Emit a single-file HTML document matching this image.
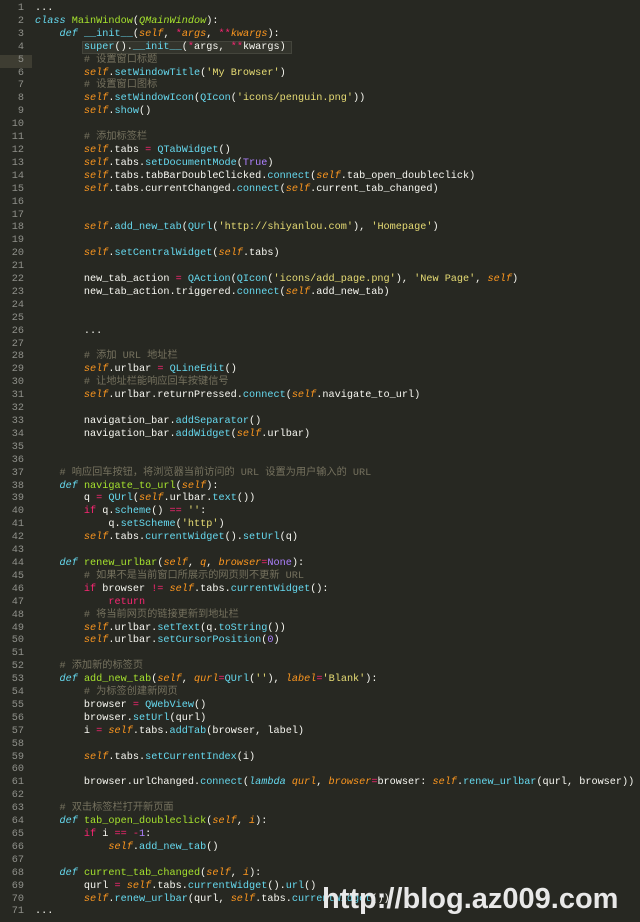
<!DOCTYPE html>
<html><head><meta charset="utf-8"><style>
html,body{margin:0;padding:0;background:#272822;width:640px;height:922px;overflow:hidden}
.w{position:absolute;left:0;top:3px}
.ln{position:absolute;left:0;width:24px;text-align:right;color:#8f908a}
.code{position:absolute;left:35px;color:#f8f8f2;white-space:pre}
.ln,.code{font-family:"Liberation Mono","Noto Sans CJK SC",monospace;font-size:10.2px;line-height:12.9px;white-space:pre}
.s,.p{color:#fd971f;font-style:italic}
.f{color:#66d9ef}
.d{color:#66d9ef;font-style:italic}
.k{color:#f92672}
.t{color:#e6db74}
.c{color:#75715e}
.n{color:#ae81ff}
.g{color:#a6e22e}
.hl{position:absolute;left:0;top:55px;width:32px;height:13px;background:#3e3d32}
.box{position:absolute;left:82px;top:41px;width:210px;height:13px;background:#33342c;border:1px solid #44453c;box-sizing:border-box}
.wm{position:absolute;left:322px;top:883px;font-family:"Liberation Sans",sans-serif;font-weight:bold;font-size:29px;color:#e8e8e8;letter-spacing:0px}
</style></head><body>
<div class="hl"></div><div class="box"></div>
<div class="w">
<div class="ln">1
2
3
4
5
6
7
8
9
10
11
12
13
14
15
16
17
18
19
20
21
22
23
24
25
26
27
28
29
30
31
32
33
34
35
36
37
38
39
40
41
42
43
44
45
46
47
48
49
50
51
52
53
54
55
56
57
58
59
60
61
62
63
64
65
66
67
68
69
70
71</div>
<div class="code">...
<span class="d">class</span> <span class="g">MainWindow</span>(<span class="g" style="font-style:italic">QMainWindow</span>):
    <span class="d">def</span> <span class="f">__init__</span>(<span class="p">self</span>, <span class="k">*</span><span class="p">args</span>, <span class="k">**</span><span class="p">kwargs</span>):
        <span class="f">super</span>().<span class="f">__init__</span>(<span class="k">*</span>args, <span class="k">**</span>kwargs)
        <span class="c"># 设置窗口标题</span>
        <span class="s">self</span>.<span class="f">setWindowTitle</span>(<span class="t">'My Browser'</span>)
        <span class="c"># 设置窗口图标</span>
        <span class="s">self</span>.<span class="f">setWindowIcon</span>(<span class="f">QIcon</span>(<span class="t">'icons/penguin.png'</span>))
        <span class="s">self</span>.<span class="f">show</span>()

        <span class="c"># 添加标签栏</span>
        <span class="s">self</span>.tabs <span class="k">=</span> <span class="f">QTabWidget</span>()
        <span class="s">self</span>.tabs.<span class="f">setDocumentMode</span>(<span class="n">True</span>)
        <span class="s">self</span>.tabs.tabBarDoubleClicked.<span class="f">connect</span>(<span class="s">self</span>.tab_open_doubleclick)
        <span class="s">self</span>.tabs.currentChanged.<span class="f">connect</span>(<span class="s">self</span>.current_tab_changed)


        <span class="s">self</span>.<span class="f">add_new_tab</span>(<span class="f">QUrl</span>(<span class="t">'http://shiyanlou.com'</span>), <span class="t">'Homepage'</span>)

        <span class="s">self</span>.<span class="f">setCentralWidget</span>(<span class="s">self</span>.tabs)

        new_tab_action <span class="k">=</span> <span class="f">QAction</span>(<span class="f">QIcon</span>(<span class="t">'icons/add_page.png'</span>), <span class="t">'New Page'</span>, <span class="s">self</span>)
        new_tab_action.triggered.<span class="f">connect</span>(<span class="s">self</span>.add_new_tab)


        ...

        <span class="c"># 添加 URL 地址栏</span>
        <span class="s">self</span>.urlbar <span class="k">=</span> <span class="f">QLineEdit</span>()
        <span class="c"># 让地址栏能响应回车按键信号</span>
        <span class="s">self</span>.urlbar.returnPressed.<span class="f">connect</span>(<span class="s">self</span>.navigate_to_url)

        navigation_bar.<span class="f">addSeparator</span>()
        navigation_bar.<span class="f">addWidget</span>(<span class="s">self</span>.urlbar)


    <span class="c"># 响应回车按钮，将浏览器当前访问的 URL 设置为用户输入的 URL</span>
    <span class="d">def</span> <span class="g">navigate_to_url</span>(<span class="p">self</span>):
        q <span class="k">=</span> <span class="f">QUrl</span>(<span class="s">self</span>.urlbar.<span class="f">text</span>())
        <span class="k">if</span> q.<span class="f">scheme</span>() <span class="k">==</span> <span class="t">''</span>:
            q.<span class="f">setScheme</span>(<span class="t">'http'</span>)
        <span class="s">self</span>.tabs.<span class="f">currentWidget</span>().<span class="f">setUrl</span>(q)

    <span class="d">def</span> <span class="g">renew_urlbar</span>(<span class="p">self</span>, <span class="p">q</span>, <span class="p">browser</span><span class="k">=</span><span class="n">None</span>):
        <span class="c"># 如果不是当前窗口所展示的网页则不更新 URL</span>
        <span class="k">if</span> browser <span class="k">!=</span> <span class="s">self</span>.tabs.<span class="f">currentWidget</span>():
            <span class="k">return</span>
        <span class="c"># 将当前网页的链接更新到地址栏</span>
        <span class="s">self</span>.urlbar.<span class="f">setText</span>(q.<span class="f">toString</span>())
        <span class="s">self</span>.urlbar.<span class="f">setCursorPosition</span>(<span class="n">0</span>)

    <span class="c"># 添加新的标签页</span>
    <span class="d">def</span> <span class="g">add_new_tab</span>(<span class="p">self</span>, <span class="p">qurl</span><span class="k">=</span><span class="f">QUrl</span>(<span class="t">''</span>), <span class="p">label</span><span class="k">=</span><span class="t">'Blank'</span>):
        <span class="c"># 为标签创建新网页</span>
        browser <span class="k">=</span> <span class="f">QWebView</span>()
        browser.<span class="f">setUrl</span>(qurl)
        i <span class="k">=</span> <span class="s">self</span>.tabs.<span class="f">addTab</span>(browser, label)

        <span class="s">self</span>.tabs.<span class="f">setCurrentIndex</span>(i)

        browser.urlChanged.<span class="f">connect</span>(<span class="d">lambda</span> <span class="p">qurl</span>, <span class="p">browser</span><span class="k">=</span>browser: <span class="s">self</span>.<span class="f">renew_urlbar</span>(qurl, browser))

    <span class="c"># 双击标签栏打开新页面</span>
    <span class="d">def</span> <span class="g">tab_open_doubleclick</span>(<span class="p">self</span>, <span class="p">i</span>):
        <span class="k">if</span> i <span class="k">==</span> <span class="k">-</span><span class="n">1</span>:
            <span class="s">self</span>.<span class="f">add_new_tab</span>()

    <span class="d">def</span> <span class="g">current_tab_changed</span>(<span class="p">self</span>, <span class="p">i</span>):
        qurl <span class="k">=</span> <span class="s">self</span>.tabs.<span class="f">currentWidget</span>().<span class="f">url</span>()
        <span class="s">self</span>.<span class="f">renew_urlbar</span>(qurl, <span class="s">self</span>.tabs.<span class="f">currentWidget</span>())
...</div>
</div>
<div class="wm">http://blog.az009.com</div>
</body></html>
